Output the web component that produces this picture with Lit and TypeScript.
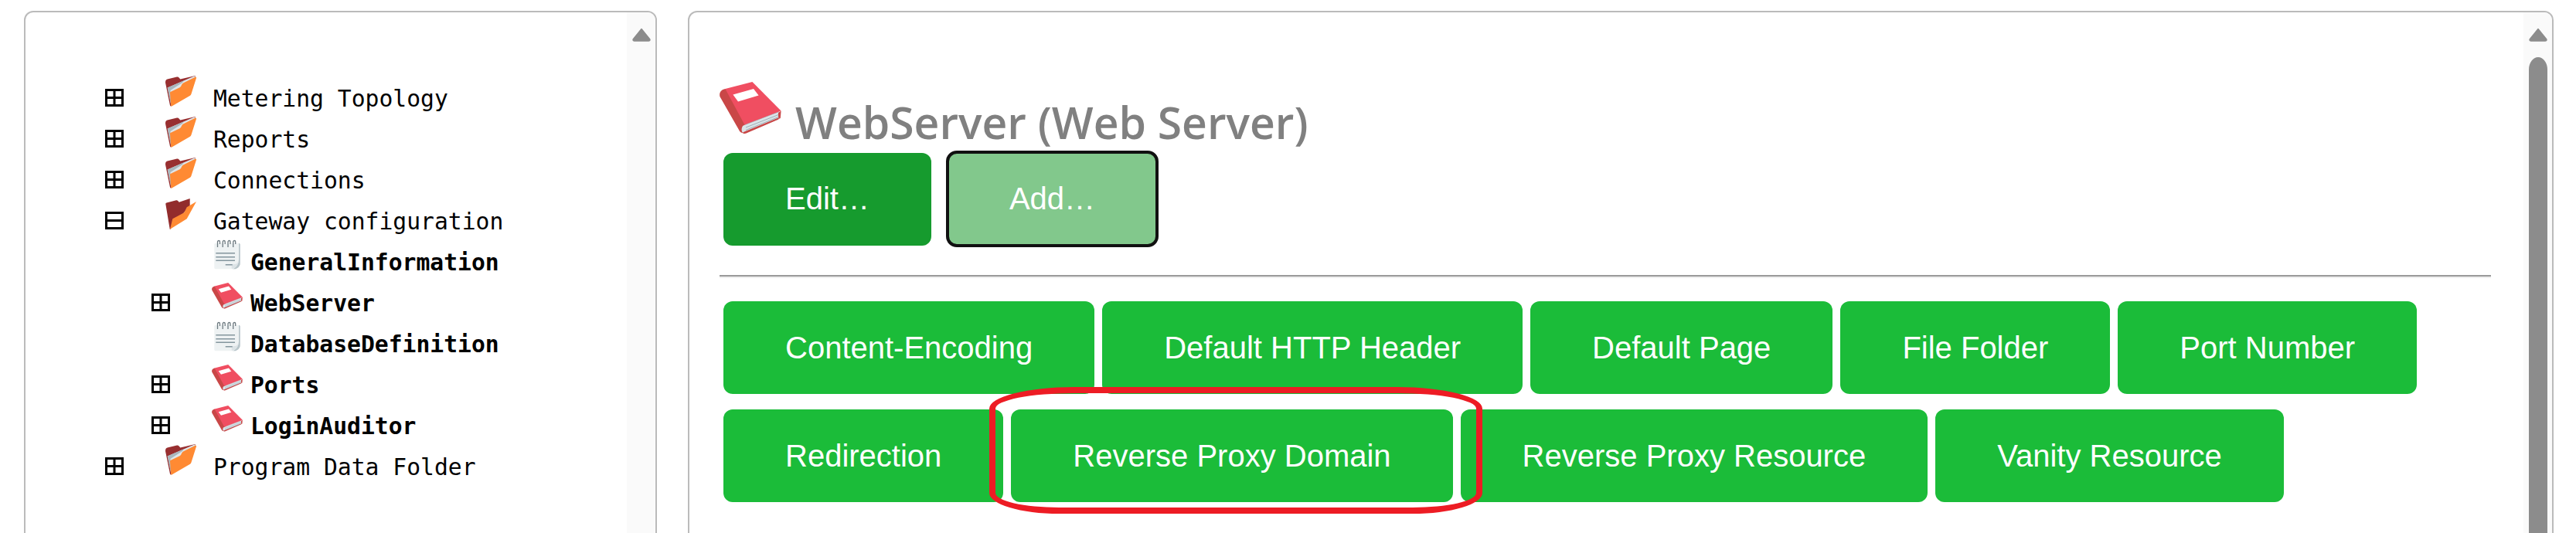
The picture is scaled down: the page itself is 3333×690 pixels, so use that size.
import { LitElement, html, css, svg } from "lit";
import { customElement } from "lit/decorators.js";

const folderClosed = svg`
  <path d="M0 9C0 6 1 5 2.5 4.5L15 1.5C17 1 18 3 19.3 4.6L38.5 0L39 3L7.5 39.5C7 39.8 6.3 39.5 6 38.5Z" fill="#982f30"/>
  <path d="M2.7 15.5L37.5 0.4L40 2.5L12 24L7.6 39Z" fill="#dfe6ea"/>
  <path d="M2.7 15.5L24 6.2L22 9L6.5 19L7.6 39Z" fill="#a9b7bd"/>
  <path d="M8.3 39.4C7.7 39.8 7.2 39.4 7.2 38.7L6 22C6 21.4 6.3 21 7 20.7L18.5 15.2C19.5 14.7 20 14 20.5 13C21 11.5 21.8 10 23.5 9.2L38.5 1.8C39.5 1.4 40.2 2 40 3L33.5 23.5C33.3 24.5 32.8 25.2 32 25.8Z" fill="#ff8a33"/>`;

const folderOpen = svg`
  <path d="M0.3 7C0.3 6.3 0.7 5.8 1.5 5.6L14 2.3C15.5 2 16.5 3 17.7 4.7L31.7 0L31.7 9L6.3 39.7C6 40 5.8 40 5.7 39.5Z" fill="#922c2c"/>
  <path d="M6 39.7L9.3 26.3L24.3 18.2L27.7 11.3L40 4L27.7 26.3Z" fill="#ff8a33"/>`;

const book = svg`
  <path d="M3.7 7.5C1 8 -0.4 10 0.2 12.5L12.5 34C13.2 35.7 14.5 36.5 16 35.8L18 32L8 10Z" fill="#c94747"/>
  <path d="M16.5 30.8L38.5 22L38.5 27L17 36C14.5 37 13.5 34 15 31.5Z" fill="#dbe4e8"/>
  <path d="M38 25L38.2 27L39.4 26.5L39.8 21.7L38 23ZM16 35.2L38 26.2L38.2 27.2L17 36.4C16.3 36.6 15.3 36.4 14.8 36Z" fill="#c94747"/>
  <path d="M17 30.5L38 22.4M17 32.5L38 24.3M17 34.2L38 25.8" stroke="#9fb0b8" stroke-width=".5" fill="none"/>
  <path d="M3.7 7.5L21.2 3L39.8 21.7L16.2 30.8Z" fill="#f04e61"/>
  <path d="M8.7 11.2L22 7.5L25.3 11.7L12 15.8Z" fill="#fff"/>`;

const note = svg`
  <path d="M3.3 6.5C3.3 5.5 4 5 5 5H35C36 5 36.7 5.7 36.7 6.7V33L31 38.3H5C4 38.3 3.3 37.6 3.3 36.5Z" fill="#eef2f3"/>
  <path d="M35 5C36 5 36.7 5.7 36.7 6.7V31C36.7 35 33 38.3 29 38.3H27C31 37 34.5 33 35 26Z" fill="#b8c5ca"/>
  <path d="M26 38C25 34 26.5 31.5 29 32C32 32.5 34 30 35 27C34.5 33 31 37 26 38Z" fill="#dce3e6"/>
  <path d="M7.5 10V3C7.5 1 10.5 1 10.5 3V6M14.2 10V3C14.2 1 17.2 1 17.2 3V6M21 10V3C21 1 24 1 24 3V6M27.7 10V3C27.7 1 30.7 1 30.7 3V6" fill="none" stroke="#6d7a80" stroke-width="1.3"/>
  <path d="M5.3 17.7H30M5.3 22.7H30M5.3 27.3H30M17.7 32.7H26.7" stroke="#84969e" stroke-width="1.6" fill="none"/>`;

type Row = { label: string; depth: 0 | 1; toggle?: "plus" | "minus"; icon: "closed" | "open" | "book" | "note" };

const ROWS: Row[] = [
  { label: "Metering Topology", depth: 0, toggle: "plus", icon: "closed" },
  { label: "Reports", depth: 0, toggle: "plus", icon: "closed" },
  { label: "Connections", depth: 0, toggle: "plus", icon: "closed" },
  { label: "Gateway configuration", depth: 0, toggle: "minus", icon: "open" },
  { label: "GeneralInformation", depth: 1, icon: "note" },
  { label: "WebServer", depth: 1, toggle: "plus", icon: "book" },
  { label: "DatabaseDefinition", depth: 1, icon: "note" },
  { label: "Ports", depth: 1, toggle: "plus", icon: "book" },
  { label: "LoginAuditor", depth: 1, toggle: "plus", icon: "book" },
  { label: "Program Data Folder", depth: 0, toggle: "plus", icon: "closed" },
];

const ROW1 = ["Content-Encoding", "Default HTTP Header", "Default Page", "File Folder", "Port Number"];
const ROW2 = ["Redirection", "Reverse Proxy Domain", "Reverse Proxy Resource", "Vanity Resource"];

const ICONS = { closed: folderClosed, open: folderOpen, book, note };

@customElement("app-root")
export class AppRoot extends LitElement {
  static styles = css`
    :host {
      display: flex;
      gap: 40px;
      height: 690px;
      box-sizing: border-box;
      padding: 14px 0 0 31px;
      overflow: hidden;
      background: #fff;
    }
    .panel {
      box-sizing: border-box;
      height: 720px;
      flex: none;
      display: flex;
      border: 2px solid #bbb;
      border-radius: 12px;
      overflow: hidden;
    }
    .left { width: 819px; }
    .right { width: 2414px; }
    .content { flex: 1; min-width: 0; box-sizing: border-box; }
    .scroll {
      width: 37px;
      flex: none;
      background: #fafafa;
      display: flex;
      flex-direction: column;
      align-items: center;
      padding-top: 20px;
      gap: 20px;
      box-sizing: border-box;
    }
    .arrow { display: block; width: 24px; height: 18px; flex: none; }
    .thumb { width: 24px; flex: 1; background: #8c8c8c; border-radius: 12px / 16px; }

    .tree { padding: 82px 0 0 103px; font: 29.7px/53px "DejaVu Sans Mono", monospace; color: #000; }
    .row { height: 53px; display: flex; align-items: baseline; white-space: pre; }
    .row.d1 { padding-left: 60px; }
    .toggle { display: block; width: 24px; height: 23px; flex: none; margin-right: 54px; }
    .spacer { width: 78px; height: 0; flex: none; }
    .icon { display: block; width: 40px; height: 40px; flex: none; overflow: visible; margin-right: 22px; }
    .row.d1 .icon { margin-right: 10px; }
    .row.d1 .label { font-weight: 700; }

    .main { padding: 84px 42px 0 39px; }
    .title { display: flex; align-items: baseline; height: 95px; gap: 18px; }
    .title svg { display: block; width: 80px; height: 80px; flex: none; }
    .title h1 {
      margin: 0;
      font: 600 57px/60px "Open Sans", sans-serif;
      color: #808080;
      white-space: nowrap;
    }
    .actions { display: flex; align-items: center; height: 125px; padding-left: 5px; gap: 19px; }
    .btn {
      box-sizing: border-box;
      height: 120px;
      padding: 0 80px;
      display: flex;
      align-items: center;
      border-radius: 12px;
      background: #1bbc39;
      color: #fff;
      font: 40px "Liberation Sans", Arial, sans-serif;
      white-space: nowrap;
      flex: none;
    }
    .edit { background: #169b2e; }
    .add {
      height: 125px;
      padding: 0 78px;
      background: #82c88c;
      border: 4.5px solid #111;
      border-radius: 14px;
    }
    hr {
      margin: 36px 0 30px;
      border: 0;
      border-top: 2px solid #999;
      border-bottom: 2px solid #eee;
      height: 0;
    }
    .grid { display: flex; flex-wrap: wrap; gap: 20px 10px; padding: 0 5px; }
    .mark { position: relative; flex: none; }
    .ring {
      position: absolute;
      inset: -29px -38px -15px -28px;
      border: 8px solid #ed1c24;
      border-radius: 110px 110px 90px 90px / 28px 28px 27px 27px;
      pointer-events: none;
    }
  `;

  private arrow() {
    return html`<svg class="arrow" viewBox="0 0 24 18">
      <path d="M12 1.5L22.5 14.5C23.5 16 22.5 17 21 17H3C1.5 17 .5 16 1.5 14.5Z" fill="#8c8c8c" stroke="#8c8c8c" stroke-width="1.5" stroke-linejoin="round" />
    </svg>`;
  }

  private toggle(kind?: "plus" | "minus") {
    if (!kind) return html`<div class="spacer"></div>`;
    return html`<svg class="toggle" viewBox="0 0 24 23">
      <rect x="1.5" y="1.5" width="21" height="20" fill="none" stroke="#000" stroke-width="3" />
      <path d="M0 11.5H24${kind === "plus" ? "M12 0V23" : ""}" stroke="#000" stroke-width="3" fill="none" />
    </svg>`;
  }

  render() {
    return html`
      <section class="panel left">
        <div class="content tree">
          ${ROWS.map(
            (r) => html`<div class="row ${r.depth ? "d1" : ""}">
              ${this.toggle(r.toggle)}
              <svg class="icon" viewBox="0 0 40 40">${ICONS[r.icon]}</svg>
              <span class="label">${r.label}</span>
            </div>`
          )}
        </div>
        <div class="scroll">${this.arrow()}</div>
      </section>
      <section class="panel right">
        <div class="content main">
          <div class="title">
            <svg viewBox="0 0 40 40">${book}</svg>
            <h1>WebServer (Web Server)</h1>
          </div>
          <div class="actions">
            <div class="btn edit">Edit…</div>
            <div class="btn add">Add…</div>
          </div>
          <hr />
          <div class="grid">
            ${ROW1.map((t) => html`<div class="btn">${t}</div>`)}
            ${ROW2.map((t) =>
              t === "Reverse Proxy Domain"
                ? html`<div class="mark"><div class="btn">${t}</div><div class="ring"></div></div>`
                : html`<div class="btn">${t}</div>`
            )}
          </div>
        </div>
        <div class="scroll">${this.arrow()}<div class="thumb"></div></div>
      </section>
    `;
  }
}
